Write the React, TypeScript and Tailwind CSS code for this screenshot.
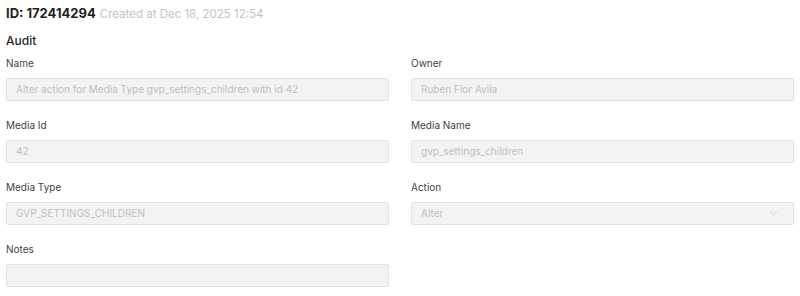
import React from 'react';
import { ChevronDown } from 'lucide-react';

type Field = {
  label: string;
  value: string;
  select?: boolean;
};

const fields: Field[] = [
  { label: 'Name', value: 'Alter action for Media Type gvp_settings_children with id 42' },
  { label: 'Owner', value: 'Ruben Flor Avila' },
  { label: 'Media Id', value: '42' },
  { label: 'Media Name', value: 'gvp_settings_children' },
  { label: 'Media Type', value: 'GVP_SETTINGS_CHILDREN' },
  { label: 'Action', value: 'Alter', select: true },
  { label: 'Notes', value: '' },
];

const FieldBox: React.FC<{ field: Field }> = ({ field }) => (
  <div className="flex flex-col">
    <label className="text-[10px] leading-[14px] text-[#3f3f3f] mb-[8px]">{field.label}</label>
    <div className="h-[23px] flex items-center justify-between rounded-[2px] border border-[#e2e2e2] bg-[#f3f3f3] pl-[9px] pr-[13px]">
      <span className="text-[10px] text-[#c0c0c0] truncate">{field.value}</span>
      {field.select && <ChevronDown size={13} strokeWidth={1.25} className="text-[#c4c4c4]" />}
    </div>
  </div>
);

export default function App() {
  return (
    <div className="bg-white w-[800px] h-[296px] px-[6px] pt-[4px] font-['Inter',sans-serif] antialiased">
      <div className="flex items-baseline gap-[4px] h-[20px]">
        <h1 className="text-[13px] font-bold text-[#1f1f1f]">ID: 172414294</h1>
        <span className="text-[11.5px] text-[#c4c4c4]">Created at Dec 18, 2025 12:54</span>
      </div>
      <h2 className="mt-[8px] text-[12px] font-medium text-[#1f1f1f] leading-[18px]">Audit</h2>
      <div className="mt-[6px] grid grid-cols-2 gap-x-[22px] gap-y-[17px]">
        {fields.map(f => (
          <FieldBox key={f.label} field={f} />
        ))}
      </div>
    </div>
  );
}
